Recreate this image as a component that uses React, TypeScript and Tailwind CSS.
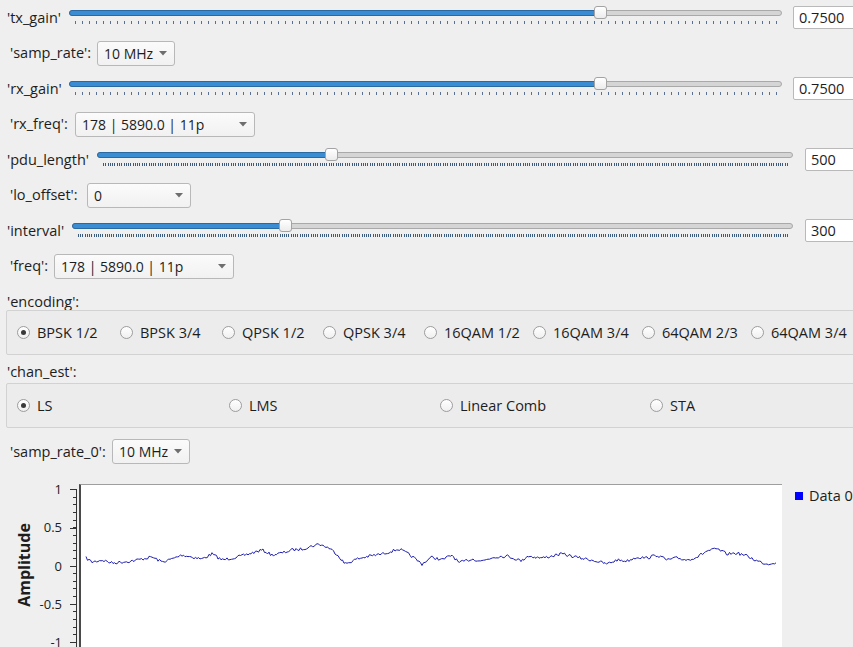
import React from "react"

const font = { fontFamily: '"Open Sans", "Noto Sans", sans-serif' }

function Ticks({ width, count, color }: { width: number; count: number; color: string }) {
  const inner = width - 12
  const step = inner / count
  const xs = Array.from({ length: count + 1 }, (_, i) => Math.round(6 + i * step) + 0.5)
  return (
    <svg className="absolute left-0 top-[15px]" width={width} height={4}>
      {xs.map((x, i) => (
        <line key={i} x1={x} x2={x} y1={0} y2={3} stroke={color} strokeWidth={1} />
      ))}
    </svg>
  )
}

function Slider({ width, frac, ticks, tickColor }: { width: number; frac: number; ticks: number; tickColor: string }) {
  const center = 6 + frac * (width - 12)
  return (
    <div className="relative h-[24px] shrink-0" style={{ width }}>
      <div className="absolute left-0 right-0 top-[4px] h-[6px] rounded-full border border-[#a9a9a9] bg-[#d5d5d5]" />
      <div
        className="absolute left-0 top-[4px] h-[6px] rounded-full border border-[#2a69a2] bg-[#3b8dd3]"
        style={{ width: center }}
      />
      <div
        className="absolute top-0 h-[13px] w-[13px] rounded-[3px] border border-[#a3a3a3] bg-gradient-to-b from-white to-[#ececec]"
        style={{ left: center - 6.5 }}
      />
      <Ticks width={width} count={ticks} color={tickColor} />
    </div>
  )
}

function ValueBox({ value, className }: { value: string; className: string }) {
  return (
    <div className={`flex h-[23px] shrink-0 items-center rounded-[2px] border border-[#b9b9b9] bg-white pl-[5px] text-[14.5px] text-[#1d1d1d] ${className}`}>
      {value}
    </div>
  )
}

function Combo({ value, className }: { value: string; className: string }) {
  return (
    <div className={`flex h-[25px] shrink-0 items-center justify-between rounded-[3px] border border-[#b8b8b8] bg-gradient-to-b from-[#fbfbfb] to-[#f1f1f1] pl-[6px] pr-[7px] text-[14px] text-[#1d1d1d] ${className}`}>
      <span className="whitespace-nowrap">{value}</span>
      <svg width="8" height="5" viewBox="0 0 8 5" className="shrink-0">
        <path d="M0 0 L8 0 L4 4.5 Z" fill="#6e6e6e" />
      </svg>
    </div>
  )
}

function Radio({ label, checked }: { label: string; checked?: boolean }) {
  return (
    <div className="flex items-center gap-[7px] text-[14.5px] text-[#1d1d1d]">
      <div className="flex h-[13px] w-[13px] shrink-0 items-center justify-center rounded-full border border-[#9d9d9d] bg-gradient-to-b from-white to-[#f0f0f0]">
        {checked && <div className="h-[5px] w-[5px] rounded-full bg-[#3a3a3a]" />}
      </div>
      <span className="whitespace-nowrap">{label}</span>
    </div>
  )
}

// hand-picked shape of the trace, page coords
const keys: [number, number][] = [
  [84, 557], [90, 561], [100, 559], [110, 562], [120, 561], [130, 560], [140, 558], [150, 556],
  [160, 561], [170, 558], [180, 554], [190, 556], [200, 558], [210, 553], [220, 559], [230, 557],
  [240, 555], [250, 552], [260, 549], [270, 554], [280, 552], [290, 549], [300, 548], [317, 543],
  [327, 547], [335, 553], [343, 563], [355, 558], [368, 555], [380, 553], [397, 548], [408, 554],
  [420, 563], [430, 556], [440, 559], [450, 554], [457, 562], [470, 558], [480, 560], [492, 556],
  [505, 555], [520, 560], [525, 555], [540, 557], [560, 553], [578, 557], [590, 559], [605, 563],
  [615, 559], [625, 560], [635, 556], [645, 557], [655, 554], [665, 559], [675, 557], [685, 559],
  [695, 556], [705, 550], [715, 548], [725, 553], [735, 552], [745, 555], [755, 560], [765, 563],
  [775, 561],
]

function trace() {
  let seed = 7
  const rnd = () => {
    seed = (seed * 16807) % 2147483647
    return seed / 2147483647 - 0.5
  }
  const pts: string[] = []
  let k = 0
  for (let x = 84; x <= 775; x += 1.5) {
    while (k < keys.length - 2 && keys[k + 1][0] < x) k++
    const [x0, y0] = keys[k]
    const [x1, y1] = keys[k + 1]
    const t = Math.min(1, Math.max(0, (x - x0) / (x1 - x0)))
    const y = y0 + (y1 - y0) * t + rnd() * 3
    pts.push(`${(x - 79).toFixed(1)},${(y - 484).toFixed(1)}`)
  }
  return pts.join(" ")
}

function YAxis() {
  const majors = [
    { v: "1", y: 489 },
    { v: "0.5", y: 527.5 },
    { v: "0", y: 566 },
    { v: "-0.5", y: 604 },
    { v: "-1", y: 642 },
  ]
  const minors = Array.from({ length: 21 }, (_, i) => 489 + i * 7.65)
  const off = 475
  return (
    <svg width="79" height="172" className="shrink-0">
      <line x1="76.5" x2="76.5" y1={489 - off} y2={172} stroke="#333" />
      {minors.map((y, i) => (
        <line key={i} x1="73" x2="77" y1={Math.round(y - off) + 0.5} y2={Math.round(y - off) + 0.5} stroke="#333" />
      ))}
      {majors.map((m) => (
        <g key={m.v}>
          <line x1="70" x2="77" y1={Math.round(m.y - off) + 0.5} y2={Math.round(m.y - off) + 0.5} stroke="#333" />
          <text x="62" y={m.y - off + 4.5} textAnchor="end" fontSize="13" fill="#1d1d1d" style={font}>
            {m.v}
          </text>
        </g>
      ))}
      <text
        x="0"
        y="0"
        transform={`translate(30 ${565 - off}) rotate(-90)`}
        textAnchor="middle"
        fontSize="16"
        fontWeight="bold"
        fill="#1d1d1d"
        style={font}
      >
        Amplitude
      </text>
    </svg>
  )
}

export default function App() {
  const points = trace()
  return (
    <div className="h-[647px] w-[853px] overflow-hidden bg-[#efefef] text-[14.5px] text-[#1d1d1d]" style={font}>
      <div className="flex w-[870px] flex-col">
        <div className="flex h-[35px] items-center">
          <span className="w-[69px] shrink-0 pl-[7px]">'tx_gain'</span>
          <Slider width={713} frac={0.75} ticks={100} tickColor="#5a7090" />
          <ValueBox value="0.7500" className="ml-[11px] w-[70px]" />
        </div>
        <div className="flex h-[36px] items-center">
          <span className="w-[97px] shrink-0 pl-[10px]">'samp_rate':</span>
          <Combo value="10 MHz" className="w-[78px]" />
        </div>
        <div className="flex h-[35px] items-center">
          <span className="w-[69px] shrink-0 pl-[7px]">'rx_gain'</span>
          <Slider width={713} frac={0.75} ticks={100} tickColor="#5a7090" />
          <ValueBox value="0.7500" className="ml-[11px] w-[70px]" />
        </div>
        <div className="flex h-[36px] items-center">
          <span className="w-[75px] shrink-0 pl-[10px]">'rx_freq':</span>
          <Combo value="178 | 5890.0 | 11p" className="w-[180px]" />
        </div>
        <div className="flex h-[35px] items-center">
          <span className="w-[97px] shrink-0 whitespace-nowrap pl-[7px]">'pdu_length'</span>
          <Slider width={696} frac={0.3334} ticks={300} tickColor="#3c5a7c" />
          <ValueBox value="500" className="ml-[12px] w-[60px]" />
        </div>
        <div className="flex h-[36px] items-center">
          <span className="w-[87px] shrink-0 whitespace-nowrap pl-[10px]">'lo_offset':</span>
          <Combo value="0" className="w-[104px]" />
        </div>
        <div className="flex h-[35px] items-center">
          <span className="w-[72px] shrink-0 pl-[7px]">'interval'</span>
          <Slider width={721} frac={0.293} ticks={320} tickColor="#3c5a7c" />
          <ValueBox value="300" className="ml-[12px] w-[60px]" />
        </div>
        <div className="flex h-[36px] items-center">
          <span className="w-[54px] shrink-0 pl-[10px]">'freq':</span>
          <Combo value="178 | 5890.0 | 11p" className="w-[180px]" />
        </div>

        <div className="h-[26px] pl-[7px] pt-[10px] leading-[16px]">'encoding':</div>
        <div className="ml-[6px] grid h-[45px] grid-cols-[103px_102px_101px_101px_109px_109px_109px_auto] items-center rounded-[2px] border border-[#d2d2d2] bg-[#ececec] pl-[10px]">
          <Radio label="BPSK 1/2" checked />
          <Radio label="BPSK 3/4" />
          <Radio label="QPSK 1/2" />
          <Radio label="QPSK 3/4" />
          <Radio label="16QAM 1/2" />
          <Radio label="16QAM 3/4" />
          <Radio label="64QAM 2/3" />
          <Radio label="64QAM 3/4" />
        </div>

        <div className="h-[28px] pl-[7px] pt-[9px] leading-[16px]">'chan_est':</div>
        <div className="ml-[6px] grid h-[45px] grid-cols-[212px_211px_210px_auto] items-center rounded-[2px] border border-[#d2d2d2] bg-[#ececec] pl-[10px]">
          <Radio label="LS" checked />
          <Radio label="LMS" />
          <Radio label="Linear Comb" />
          <Radio label="STA" />
        </div>

        <div className="flex h-[47px] items-center">
          <span className="w-[102px] shrink-0 whitespace-nowrap pl-[10px]">'samp_rate_0':</span>
          <Combo value="10 MHz" className="ml-[10px] w-[78px]" />
        </div>

        <div className="flex h-[172px]">
          <YAxis />
          <div className="mt-[9px] h-[163px] w-[703px] shrink-0 border-l-2 border-t border-l-[#4a4a4a] border-t-[#9e9e9e] bg-white">
            <svg width="701" height="162" className="block">
              <polyline points={points} fill="none" stroke="#1f1fb0" strokeWidth="1" strokeLinejoin="round" />
            </svg>
          </div>
          <div className="flex h-[40px] items-start gap-[6px] pl-[13px] pt-[12px]">
            <div className="mt-[5px] h-[8px] w-[8px] shrink-0 bg-[#0000ff]" />
            <span className="whitespace-nowrap leading-[18px]">Data 0</span>
          </div>
        </div>
      </div>
    </div>
  )
}
